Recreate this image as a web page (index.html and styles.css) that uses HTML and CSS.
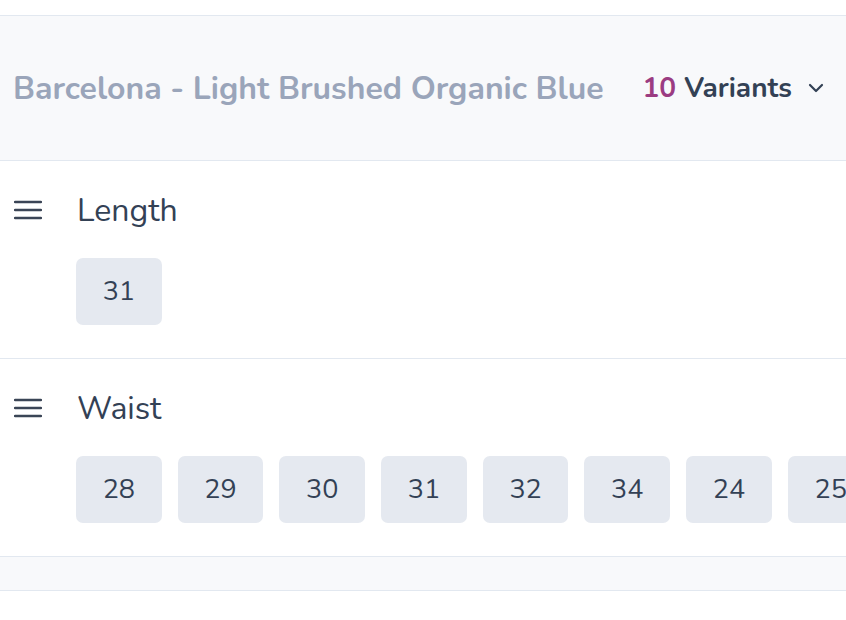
FILE: index.html
```html
<!DOCTYPE html>
<html>
<head>
<meta charset="utf-8">
<link rel="stylesheet" href="styles.css">
</head>
<body>
<div class="page">
  <div class="top-gap"></div>
  <div class="header">
    <div class="title">Barcelona - Light Brushed Organic Blue</div>
    <div class="variants">
      <span class="count">10</span>
      <span class="vlabel">Variants</span>
      <svg class="chev" width="20" height="20" viewBox="0 0 20 20"><path d="M4 7 L10 13 L16 7" fill="none" stroke="#334155" stroke-width="2.2" stroke-linecap="round" stroke-linejoin="round"/></svg>
    </div>
  </div>
  <div class="section">
    <div class="sec-head">
      <svg class="menu" width="28" height="20" viewBox="0 0 28 20"><path d="M1 2 H27 M1 10 H27 M1 18 H27" stroke="#3a4556" stroke-width="2.4" stroke-linecap="round"/></svg>
      <div class="label">Length</div>
    </div>
    <div class="chips">
      <div class="chip">31</div>
    </div>
  </div>
  <div class="section">
    <div class="sec-head">
      <svg class="menu" width="28" height="20" viewBox="0 0 28 20"><path d="M1 2 H27 M1 10 H27 M1 18 H27" stroke="#3a4556" stroke-width="2.4" stroke-linecap="round"/></svg>
      <div class="label">Waist</div>
    </div>
    <div class="chips">
      <div class="chip">28</div>
      <div class="chip">29</div>
      <div class="chip">30</div>
      <div class="chip">31</div>
      <div class="chip">32</div>
      <div class="chip">34</div>
      <div class="chip">24</div>
      <div class="chip">25</div>
    </div>
  </div>
  <div class="strip"></div>
</div>
</body>
</html>
```
FILE: styles.css
```css
html, body {
  margin: 0;
  padding: 0;
  background: #ffffff;
  overflow: hidden;
}
body {
  width: 846px;
  height: 620px;
  font-family: "Nunito", "Open Sans", "Noto Sans", sans-serif;
  color: #334155;
}
.page {
  width: 846px;
}
.top-gap {
  height: 15px;
  border-bottom: 1px solid #e2e8f0;
}
.header {
  height: 144px;
  background: #f8f9fb;
  border-bottom: 1px solid #e2e8f0;
  display: flex;
  align-items: center;
  justify-content: space-between;
  padding: 0 20px 0 13px;
}
.title {
  font-size: 32px;
  font-weight: 700;
  color: #9aa5ba;
  white-space: nowrap;
}
.variants {
  display: flex;
  align-items: center;
  font-size: 28px;
  font-weight: 700;
  white-space: nowrap;
}
.count {
  color: #9b3c82;
  margin-right: 8px;
}
.vlabel {
  color: #334155;
}
.chev {
  margin-left: 14px;
}
.section {
  border-bottom: 1px solid #e2e8f0;
  padding: 28px 0 33px 0;
}
.sec-head {
  height: 42px;
  display: flex;
  align-items: center;
  padding-left: 14px;
}
.menu {
  width: 28px;
  height: 20px;
  margin-right: 35px;
}
.label {
  font-size: 32px;
  color: #334155;
}
.chips {
  margin-top: 27px;
  padding-left: 76px;
  display: flex;
  gap: 16px;
  overflow: hidden;
}
.chip {
  flex: 0 0 auto;
  width: 85.7px;
  height: 67px;
  background: #e5e9f0;
  border-radius: 7px;
  display: flex;
  align-items: center;
  justify-content: center;
  font-size: 27px;
  color: #334155;
}
.strip {
  height: 33px;
  background: #f8f9fb;
  border-bottom: 1px solid #e2e8f0;
}
```
